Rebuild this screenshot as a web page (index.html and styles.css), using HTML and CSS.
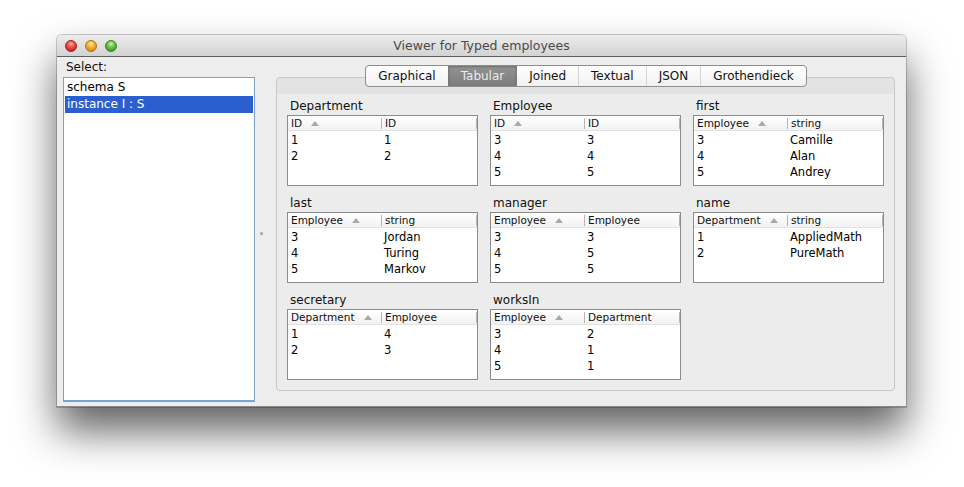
FILE: index.html
```html
<!DOCTYPE html>
<html>
<head>
<meta charset="utf-8">
<title>Viewer for Typed employees</title>
<link rel="stylesheet" href="styles.css">
</head>
<body>
<div class="window">
  <div class="titlebar">
    <div class="lights">
      <span class="light red"></span>
      <span class="light yellow"></span>
      <span class="light green"></span>
    </div>
    <div class="title">Viewer for Typed employees</div>
    <div></div>
  </div>
  <div class="content">
    <div class="left">
      <div class="select-label">Select:</div>
      <div class="list">
        <div class="item">schema S</div>
        <div class="item sel">instance I : S</div>
      </div>
    </div>
    <div class="splitter"><span class="grip"></span></div>
    <div class="tabarea">
      <div class="tabs">
        <div class="tab">Graphical</div>
        <div class="tab active">Tabular</div>
        <div class="tab">Joined</div>
        <div class="tab">Textual</div>
        <div class="tab">JSON</div>
        <div class="tab">Grothendieck</div>
      </div>
      <div class="pane">
        <div class="grid">
          <div class="cell">
            <div class="ttitle">Department</div>
            <div class="table">
              <div class="thead"><div class="th">ID<span class="arrow"></span></div><div class="th">ID</div></div>
              <div class="tr"><div class="td">1</div><div class="td">1</div></div>
              <div class="tr"><div class="td">2</div><div class="td">2</div></div>
            </div>
          </div>
          <div class="cell">
            <div class="ttitle">Employee</div>
            <div class="table">
              <div class="thead"><div class="th">ID<span class="arrow"></span></div><div class="th">ID</div></div>
              <div class="tr"><div class="td">3</div><div class="td">3</div></div>
              <div class="tr"><div class="td">4</div><div class="td">4</div></div>
              <div class="tr"><div class="td">5</div><div class="td">5</div></div>
            </div>
          </div>
          <div class="cell">
            <div class="ttitle">first</div>
            <div class="table">
              <div class="thead"><div class="th">Employee<span class="arrow"></span></div><div class="th">string</div></div>
              <div class="tr"><div class="td">3</div><div class="td">Camille</div></div>
              <div class="tr"><div class="td">4</div><div class="td">Alan</div></div>
              <div class="tr"><div class="td">5</div><div class="td">Andrey</div></div>
            </div>
          </div>
          <div class="cell">
            <div class="ttitle">last</div>
            <div class="table">
              <div class="thead"><div class="th">Employee<span class="arrow"></span></div><div class="th">string</div></div>
              <div class="tr"><div class="td">3</div><div class="td">Jordan</div></div>
              <div class="tr"><div class="td">4</div><div class="td">Turing</div></div>
              <div class="tr"><div class="td">5</div><div class="td">Markov</div></div>
            </div>
          </div>
          <div class="cell">
            <div class="ttitle">manager</div>
            <div class="table">
              <div class="thead"><div class="th">Employee<span class="arrow"></span></div><div class="th">Employee</div></div>
              <div class="tr"><div class="td">3</div><div class="td">3</div></div>
              <div class="tr"><div class="td">4</div><div class="td">5</div></div>
              <div class="tr"><div class="td">5</div><div class="td">5</div></div>
            </div>
          </div>
          <div class="cell">
            <div class="ttitle">name</div>
            <div class="table">
              <div class="thead"><div class="th">Department<span class="arrow"></span></div><div class="th">string</div></div>
              <div class="tr"><div class="td">1</div><div class="td">AppliedMath</div></div>
              <div class="tr"><div class="td">2</div><div class="td">PureMath</div></div>
            </div>
          </div>
          <div class="cell">
            <div class="ttitle">secretary</div>
            <div class="table">
              <div class="thead"><div class="th">Department<span class="arrow"></span></div><div class="th">Employee</div></div>
              <div class="tr"><div class="td">1</div><div class="td">4</div></div>
              <div class="tr"><div class="td">2</div><div class="td">3</div></div>
            </div>
          </div>
          <div class="cell">
            <div class="ttitle">worksIn</div>
            <div class="table">
              <div class="thead"><div class="th">Employee<span class="arrow"></span></div><div class="th">Department</div></div>
              <div class="tr"><div class="td">3</div><div class="td">2</div></div>
              <div class="tr"><div class="td">4</div><div class="td">1</div></div>
              <div class="tr"><div class="td">5</div><div class="td">1</div></div>
            </div>
          </div>
        </div>
      </div>
    </div>
  </div>
</div>
</body>
</html>
```

FILE: styles.css
```css
html {
  height: 100%;
  background: #ffffff;
}
body {
  margin: 0;
  min-height: 100%;
  box-sizing: border-box;
  padding: 35px 0 0 57px;
  font-family: "DejaVu Sans", "Liberation Sans", sans-serif;
  color: #000;
  background: #ffffff;
}
.window {
  width: 849px;
  border-radius: 5px 5px 0 0;
  box-shadow: 0 24px 42px rgba(0, 0, 0, 0.62), 0 0 0 1px rgba(0, 0, 0, 0.2);
  background: #ededed;
}
.titlebar {
  height: 21px;
  border-bottom: 1px solid #5e5e5e;
  border-radius: 5px 5px 0 0;
  background: linear-gradient(#ececec, #d3d3d3);
  display: grid;
  grid-template-columns: 1fr auto 1fr;
  align-items: center;
}
.lights {
  display: flex;
  gap: 8px;
  padding-left: 8px;
}
.light {
  width: 12px;
  height: 12px;
  border-radius: 50%;
  box-sizing: border-box;
}
.red {
  background: radial-gradient(circle at 50% 30%, #ffb1a8 0, #f05a4f 35%, #c8201a 80%);
  border: 1px solid #a1221c;
}
.yellow {
  background: radial-gradient(circle at 50% 30%, #ffe9a8 0, #f7b53a 35%, #d68a10 80%);
  border: 1px solid #b07311;
}
.green {
  background: radial-gradient(circle at 50% 30%, #d2f7b5 0, #73c94f 35%, #3f9a28 80%);
  border: 1px solid #3c8523;
}
.title {
  font-size: 12.5px;
  color: #4a4a4a;
  line-height: 21px;
}
.content {
  display: flex;
  height: 349px;
  border-bottom: 1px solid #8a8a8a;
  background: #ededed;
}
.left {
  padding: 3px 0 0 6px;
  width: 192px;
  display: flex;
  flex-direction: column;
}
.select-label {
  font-size: 12px;
  height: 17px;
  line-height: 14px;
  padding-left: 3px;
  color: #111;
}
.list {
  height: 325px;
  background: #fff;
  border: 1px solid #7f9fd3;
  border-bottom: 2px solid #7aa0d8;
  padding: 1px 1px 0 1px;
  box-sizing: border-box;
}
.item {
  font-size: 12px;
  height: 17px;
  line-height: 17px;
  padding-left: 2px;
}
.item.sel {
  background: #2b5fcf;
  color: #fff;
}
.splitter {
  width: 21px;
  display: flex;
  align-items: center;
  padding-left: 5px;
  box-sizing: border-box;
}
.grip {
  width: 3px;
  height: 3px;
  border-radius: 50%;
  background: #a4a4a4;
  margin-top: 4px;
}
.tabarea {
  width: 619px;
  padding-top: 8px;
  display: flex;
  flex-direction: column;
}
.tabs {
  align-self: center;
  display: flex;
  height: 20px;
  border: 1px solid #8d8d8d;
  border-radius: 4px;
  background: linear-gradient(#ffffff, #f1f1f1);
  position: relative;
  z-index: 1;
  overflow: hidden;
  margin-left: 1px;
}
.tab {
  font-size: 12px;
  line-height: 20px;
  padding: 0 12px;
  color: #111;
  border-left: 1px solid #d4d4d4;
}
.tab:first-child {
  border-left: none;
}
.tab.active {
  background: linear-gradient(#929292, #7c7c7c);
  color: #ececec;
  border-left: 1px solid #7a7a7a;
  box-shadow: inset 0 1px 2px rgba(0, 0, 0, 0.25);
}
.tab.active + .tab {
  border-left: 1px solid #7a7a7a;
}
.pane {
  margin-top: -10px;
  height: 291px;
  border: 1px solid #c9c9c9;
  border-radius: 4px;
  background: linear-gradient(#e3e3e3 0, #e3e3e3 16px, #ececec 16px);
  padding: 21px 0 0 10px;
}
.grid {
  display: grid;
  grid-template-columns: repeat(3, 191px);
  column-gap: 12px;
  row-gap: 10px;
}
.ttitle {
  font-size: 12px;
  height: 16px;
  line-height: 14px;
  padding-left: 3px;
  color: #111;
}
.table {
  height: 69px;
  border: 1px solid #8c8c8c;
  background: #fff;
}
.thead {
  display: grid;
  grid-template-columns: 94px 95px;
  height: 14px;
  background: linear-gradient(#ffffff, #f2f2f2);
  border-bottom: 1px solid #e2e2e2;
  margin-bottom: 1px;
}
.th {
  font-size: 10.5px;
  line-height: 14px;
  padding-left: 3px;
  color: #111;
  position: relative;
  display: flex;
  align-items: center;
}
.th::after {
  content: "";
  position: absolute;
  right: 0;
  top: 2px;
  bottom: 1px;
  border-right: 1px solid #b5b5b5;
}
.arrow {
  width: 0;
  height: 0;
  border-left: 4.5px solid transparent;
  border-right: 4.5px solid transparent;
  border-bottom: 5px solid #a9a9a9;
  margin-left: 9px;
}
.tr {
  display: grid;
  grid-template-columns: 95px 1fr;
  height: 16px;
}
.td {
  font-size: 11.5px;
  line-height: 17px;
  padding-left: 3px;
}
.td + .td {
  padding-left: 1px;
}
```
